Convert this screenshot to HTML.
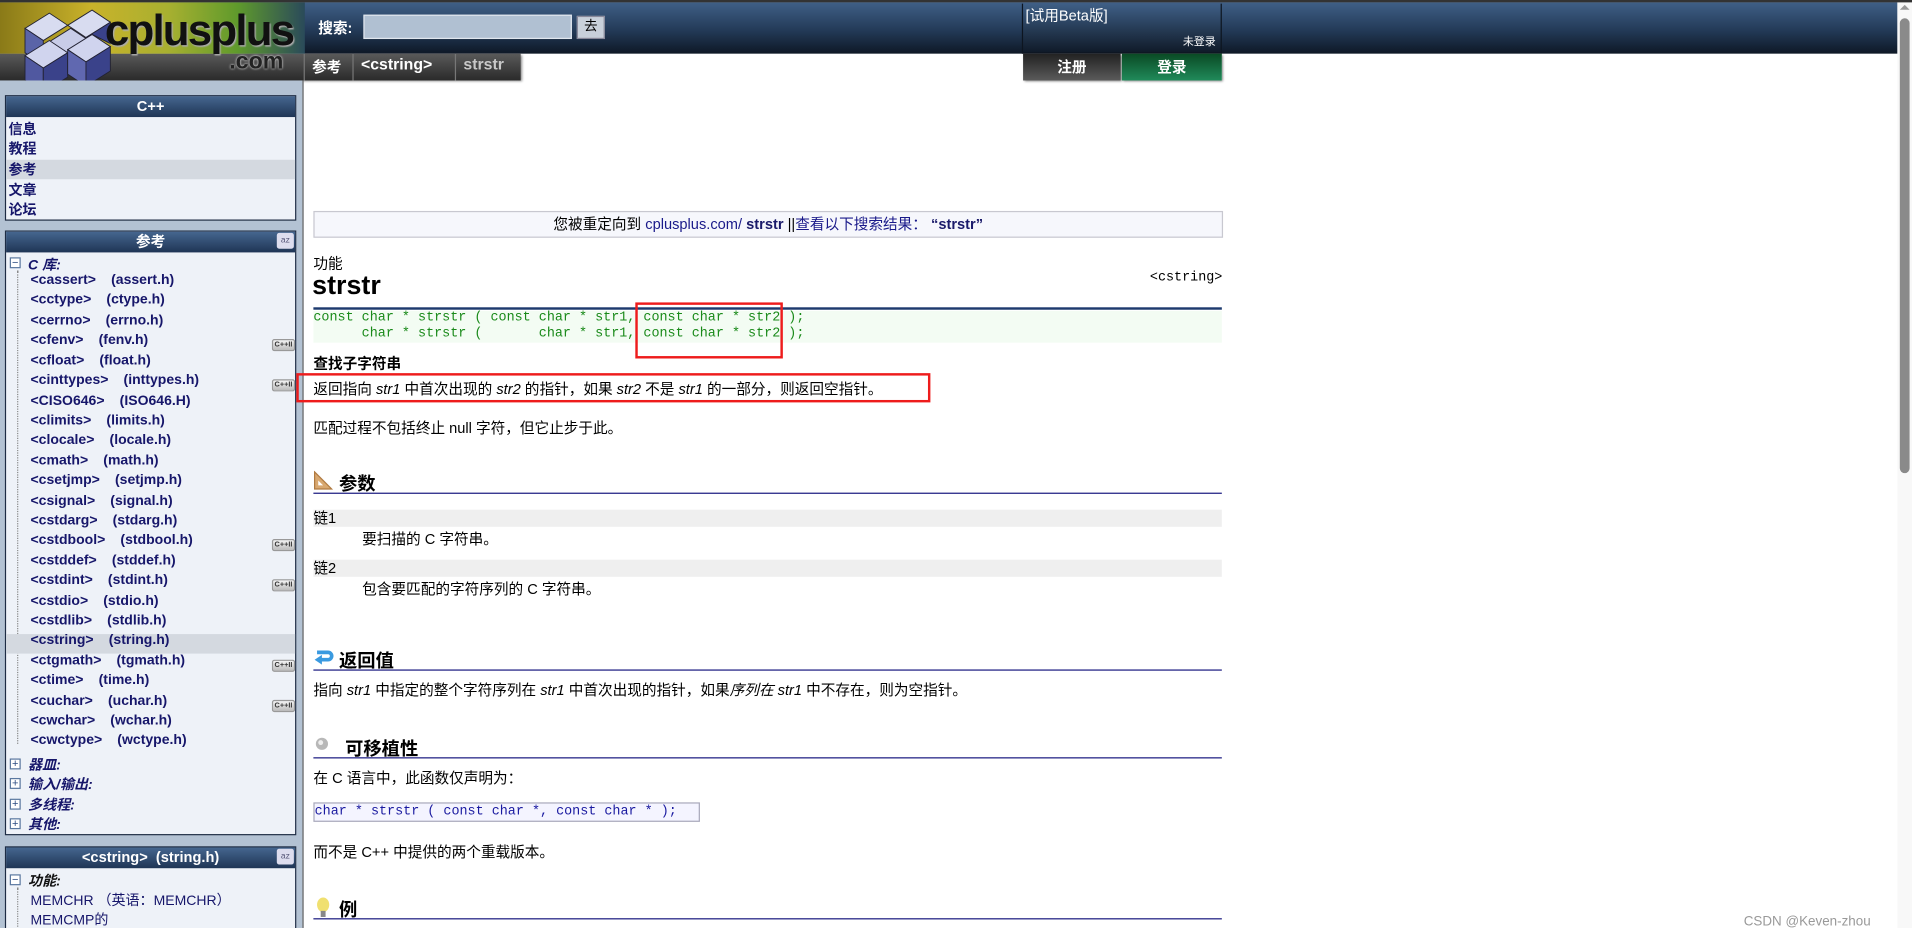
<!DOCTYPE html>
<html><head><meta charset="utf-8"><style>
*{margin:0;padding:0;box-sizing:border-box}
html,body{width:1912px;height:928px;overflow:hidden;background:#fff}
#w{position:absolute;left:0;top:0;width:1568px;height:761px;transform:scale(1.2194);transform-origin:0 0;font-family:"Liberation Sans","Noto Sans CJK SC",sans-serif;font-size:12px;color:#000;overflow:hidden}
.a{position:absolute;white-space:nowrap}
.hdr{position:absolute;left:0;top:2px;width:1556px;height:42px;background:linear-gradient(#3f5f86,#233a57 55%,#0e1826)}
.logo{position:absolute;left:0;top:2px;width:250px;height:42px;background:linear-gradient(90deg,#8a7a18,#c9b22a 30%,#a8b030 55%,#5f9a2c 78%,#2a4a5a 100%)}
.logo2{position:absolute;left:0;top:44px;width:427px;height:22px;background:linear-gradient(#5a5a5a,#2a2a2a);box-shadow:1px 1px 2px #888}
.side{position:absolute;left:0;top:66px;width:249px;height:695px;background:#b3c2d3;border-right:1px solid #666}
.box{position:absolute;left:4px;width:239px;background:#eef2f8;border:1px solid #1d2c44}
.bh{height:17px;background:linear-gradient(#45668f,#1f3555);color:#fff;font-weight:bold;text-align:center;font-size:12px;line-height:17px}
.it{position:absolute;left:2px;font-weight:bold;color:#16166a;font-size:11.5px}
.li{position:absolute;left:20px;font-weight:bold;color:#16166a;font-size:11.5px;word-spacing:3px}
.cpp{position:absolute;left:218px;width:19px;height:10px;background:linear-gradient(#f4f4f4,#bbb);border:1px solid #999;border-radius:2px;font-size:6px;line-height:8px;text-align:center;color:#333;font-weight:bold}
.tree{position:absolute;left:9px;border-left:1px dotted #888}
.pm{position:absolute;left:3px;width:9px;height:9px;border:1px solid #5a78a0;background:#fff;font-size:9px;line-height:7px;text-align:center;color:#2a4a80}
.h2{position:absolute;left:257px;width:745px;border-bottom:1px solid #1a1a80;font-weight:bold;font-size:15px;height:19px}
.mono{font-family:"Liberation Mono","DejaVu Sans Mono",monospace}
a{color:#1a1a8a;text-decoration:none}
</style></head><body><div id="w">
<div style="position:absolute;left:0;top:0;width:1568px;height:2px;background:#333"></div>
<div class="hdr"></div>
<div class="logo2"></div>
<div class="logo"></div>
<svg class="a" style="left:8px;top:3px" width="100" height="78" viewBox="0 0 80 62">
<g stroke="#223" stroke-width=".6">
<polygon points="10,16 26,6 38,14 22,24" fill="#d8dcf0"/>
<polygon points="10,16 22,24 22,40 10,32" fill="#5a64a8"/>
<polygon points="38,14 54,4 66,12 50,22" fill="#d8dcf0"/>
<polygon points="24,26 40,16 52,24 36,34" fill="#c8cce8"/>
<polygon points="10,34 26,24 38,32 22,42" fill="#d0d4ee"/>
<polygon points="10,34 22,42 22,58 10,50" fill="#5058a0"/>
<polygon points="22,42 38,32 38,48 22,58" fill="#3a428a"/>
<polygon points="38,30 54,20 66,28 50,38" fill="#d0d4ee"/>
<polygon points="38,30 50,38 50,54 38,46" fill="#6068b0"/>
<polygon points="50,38 66,28 66,44 50,54" fill="#3a428a"/>
<polygon points="50,22 66,12 66,26 54,20" fill="#3a428a"/>
</g></svg>
<div class="a" style="left:86px;top:4px;font-size:36px;font-weight:bold;color:#111;letter-spacing:-1.5px;text-shadow:1px 1px 1px #aaa">cplusplus</div>
<div class="a" style="left:188px;top:40px;font-size:19px;font-weight:bold;color:#222;text-shadow:0 0 2px #fff">.com</div>
<div class="a" style="left:261px;top:14px;color:#fff;font-weight:bold;font-size:12px">搜索:</div>
<div class="a" style="left:298px;top:12px;width:171px;height:20px;background:#b0c0d2;border:1px solid #e0e6ee"></div>
<div class="a" style="left:473px;top:13px;width:23px;height:19px;background:#c8d0da;border:1px solid #889;text-align:center;font-size:11px;line-height:17px">去</div>
<div class="a" style="left:249px;top:44px;width:1px;height:22px;background:#777"></div>
<div class="a" style="left:256px;top:46px;color:#fff;font-weight:bold;font-size:12px">参考</div>
<div class="a" style="left:289px;top:44px;width:1px;height:22px;background:#777"></div>
<div class="a" style="left:296px;top:45px;color:#fff;font-weight:bold;font-size:13px">&lt;cstring&gt;</div>
<div class="a" style="left:373px;top:44px;width:1px;height:22px;background:#777"></div>
<div class="a" style="left:380px;top:45px;color:#c8c8c8;font-weight:bold;font-size:13px">strstr</div>
<div class="a" style="left:838px;top:3px;width:164px;height:41px;border:1px solid #0d1520;border-top:none;background:linear-gradient(#3f5f86,#0f1a28)"></div>
<div class="a" style="left:841px;top:4px;color:#fff;font-size:12px">[试用Beta版]</div>
<div class="a" style="left:970px;top:27px;color:#fff;font-size:9px">未登录</div>
<div class="a" style="left:839px;top:44px;width:80px;height:22px;background:linear-gradient(#222,#5a5a5a);color:#fff;font-weight:bold;text-align:center;line-height:22px;box-shadow:1px 1px 2px #777">注册</div>
<div class="a" style="left:920px;top:44px;width:82px;height:22px;background:linear-gradient(#0a4a24,#208a5a);color:#fff;font-weight:bold;text-align:center;line-height:22px;box-shadow:1px 1px 2px #777">登录</div>

<div class="side"></div>
<div class="box" style="top:78px;height:103px"><div class="bh">C++</div>
<div class="a" style="left:0;top:52px;width:237px;height:16px;background:#d4d9e0"></div>
<div class="it" style="top:19px">信息</div><div class="it" style="top:35px">教程</div><div class="it" style="top:52px">参考</div><div class="it" style="top:69px">文章</div><div class="it" style="top:85px">论坛</div></div>

<div class="box" style="top:189px;height:496px"><div class="bh">参考</div>
<div class="a" style="left:222px;top:1px;width:14px;height:13px;background:#dde;border-radius:2px;font-size:7px;color:#557;text-align:center;line-height:13px">az</div>
<div class="pm" style="top:21px">−</div>
<div class="a" style="left:18px;top:19px;font-weight:bold;font-style:italic;color:#16166a;font-size:11.5px">C 库:</div>
<div class="tree" style="top:32px;height:388px"></div>
<div class="a" style="left:0;top:330px;width:237px;height:16px;background:#d4d9e0"></div>
<div class="li" style="top:34px">&lt;cassert&gt; &nbsp;(assert.h)</div>
<div class="li" style="top:50px">&lt;cctype&gt; &nbsp;(ctype.h)</div>
<div class="li" style="top:67px">&lt;cerrno&gt; &nbsp;(errno.h)</div>
<div class="li" style="top:83px">&lt;cfenv&gt; &nbsp;(fenv.h)</div><div class="cpp" style="top:88px">C++II</div>
<div class="li" style="top:100px">&lt;cfloat&gt; &nbsp;(float.h)</div>
<div class="li" style="top:116px">&lt;cinttypes&gt; &nbsp;(inttypes.h)</div><div class="cpp" style="top:121px">C++II</div>
<div class="li" style="top:133px">&lt;CISO646&gt; &nbsp;(ISO646.H)</div>
<div class="li" style="top:149px">&lt;climits&gt; &nbsp;(limits.h)</div>
<div class="li" style="top:165px">&lt;clocale&gt; &nbsp;(locale.h)</div>
<div class="li" style="top:182px">&lt;cmath&gt; &nbsp;(math.h)</div>
<div class="li" style="top:198px">&lt;csetjmp&gt; &nbsp;(setjmp.h)</div>
<div class="li" style="top:215px">&lt;csignal&gt; &nbsp;(signal.h)</div>
<div class="li" style="top:231px">&lt;cstdarg&gt; &nbsp;(stdarg.h)</div>
<div class="li" style="top:247px">&lt;cstdbool&gt; &nbsp;(stdbool.h)</div><div class="cpp" style="top:252px">C++II</div>
<div class="li" style="top:264px">&lt;cstddef&gt; &nbsp;(stddef.h)</div>
<div class="li" style="top:280px">&lt;cstdint&gt; &nbsp;(stdint.h)</div><div class="cpp" style="top:285px">C++II</div>
<div class="li" style="top:297px">&lt;cstdio&gt; &nbsp;(stdio.h)</div>
<div class="li" style="top:313px">&lt;cstdlib&gt; &nbsp;(stdlib.h)</div>
<div class="li" style="top:329px">&lt;cstring&gt; &nbsp;(string.h)</div>
<div class="li" style="top:346px">&lt;ctgmath&gt; &nbsp;(tgmath.h)</div><div class="cpp" style="top:351px">C++II</div>
<div class="li" style="top:362px">&lt;ctime&gt; &nbsp;(time.h)</div>
<div class="li" style="top:379px">&lt;cuchar&gt; &nbsp;(uchar.h)</div><div class="cpp" style="top:384px">C++II</div>
<div class="li" style="top:395px">&lt;cwchar&gt; &nbsp;(wchar.h)</div>
<div class="li" style="top:411px">&lt;cwctype&gt; &nbsp;(wctype.h)</div>
<div class="pm" style="top:432px">+</div><div class="a" style="left:18px;top:429px;font-weight:bold;font-style:italic;color:#16166a;font-size:11.5px">器皿:</div>
<div class="pm" style="top:448px">+</div><div class="a" style="left:18px;top:445px;font-weight:bold;font-style:italic;color:#16166a;font-size:11.5px">输入/输出:</div>
<div class="pm" style="top:465px">+</div><div class="a" style="left:18px;top:462px;font-weight:bold;font-style:italic;color:#16166a;font-size:11.5px">多线程:</div>
<div class="pm" style="top:481px">+</div><div class="a" style="left:18px;top:478px;font-weight:bold;font-style:italic;color:#16166a;font-size:11.5px">其他:</div>
</div>

<div class="box" style="top:694px;height:80px"><div class="bh">&lt;cstring&gt; &nbsp;(string.h)</div>
<div class="a" style="left:222px;top:1px;width:14px;height:13px;background:#dde;border-radius:2px;font-size:7px;color:#557;text-align:center;line-height:13px">az</div>
<div class="pm" style="top:22px">−</div>
<div class="a" style="left:18px;top:19px;font-weight:bold;font-style:italic;color:#111;font-size:11.5px">功能:</div>
<div class="tree" style="top:33px;height:40px"></div>
<div class="a" style="left:20px;top:35px;color:#16166a;font-size:11.5px">MEMCHR （英语：MEMCHR）</div>
<div class="a" style="left:20px;top:51px;color:#16166a;font-size:11.5px">MEMCMP的</div>
</div>

<div class="a" style="left:257px;top:173px;width:746px;height:22px;background:#f6f7fc;border:1px solid #c8c8d0;text-align:center;line-height:20px;font-size:12px">您被重定向到 <a>cplusplus.com/</a> <b style="color:#1a1a6a">strstr</b> ||<a>查看以下搜索结果：</a> <b style="color:#1a1a6a">“strstr”</b></div>
<div class="a" style="left:257px;top:207px">功能</div>
<div class="a" style="left:256px;top:221px;font-size:22px;font-weight:bold">strstr</div>
<div class="a mono" style="left:943px;top:222px;font-size:11px">&lt;cstring&gt;</div>
<div class="a" style="left:257px;top:252px;width:745px;height:2px;background:#1d3a6e"></div>
<div class="a mono" style="left:257px;top:255px;width:745px;height:26px;background:#f3fcf3;color:#1a8a1a;font-size:11px;line-height:13px;white-space:pre">const char * strstr ( const char * str1, const char * str2 );
      char * strstr (       char * str1, const char * str2 );</div>
<div class="a" style="left:521px;top:248px;width:121px;height:46px;border:2px solid #ee1c1c"></div>
<div class="a" style="left:257px;top:289px;font-weight:bold">查找子字符串</div>
<div class="a" style="left:243px;top:306px;width:520px;height:24px;border:2px solid #ee1c1c"></div>
<div class="a" style="left:257px;top:310px">返回指向 <i>str1</i> 中首次出现的 <i>str2</i> 的指针，如果 <i>str2</i> 不是 <i>str1</i> 的一部分，则返回空指针。</div>
<div class="a" style="left:257px;top:342px">匹配过程不包括终止 null 字符，但它止步于此。</div>

<div class="h2" style="top:386px"><svg style="position:absolute;left:0;top:0" width="16" height="16"><polygon points="1,1 1,15 15,15" fill="#d8a870" stroke="#b07a40"/><polygon points="4,8 4,12 8,12" fill="#fff"/></svg><span style="position:absolute;left:21px;top:0">参数</span></div>
<div class="a" style="left:257px;top:418px;width:745px;height:14px;background:#efefef;line-height:14px">链1</div>
<div class="a" style="left:297px;top:433px">要扫描的 C 字符串。</div>
<div class="a" style="left:257px;top:459px;width:745px;height:14px;background:#efefef;line-height:14px">链2</div>
<div class="a" style="left:297px;top:474px">包含要匹配的字符序列的 C 字符串。</div>

<div class="h2" style="top:531px"><svg style="position:absolute;left:0;top:0" width="17" height="17"><path d="M3 4h9a3 3 0 0 1 0 6H6" fill="none" stroke="#3a9ae0" stroke-width="3"/><polygon points="1,10 7,6 7,14" fill="#3a9ae0"/></svg><span style="position:absolute;left:21px;top:0">返回值</span></div>
<div class="a" style="left:257px;top:557px">指向 <i>str1</i> 中指定的整个字符序列在 <i>str1</i> 中首次出现的指针，如果<i>序列在 str1</i> 中不存在，则为空指针。</div>

<div class="h2" style="top:603px"><svg style="position:absolute;left:0;top:0" width="16" height="16"><circle cx="7" cy="7" r="5" fill="#b8b8b8"/><circle cx="6" cy="6" r="2" fill="#eee"/></svg><span style="position:absolute;left:26px;top:0">可移植性</span></div>
<div class="a" style="left:257px;top:629px">在 C 语言中，此函数仅声明为：</div>
<div class="a mono" style="left:257px;top:658px;width:317px;height:16px;background:#f4f4ff;border:1px solid #aab;color:#1a1aa0;font-size:11px;line-height:14px;white-space:pre">char * strstr ( const char *, const char * );</div>
<div class="a" style="left:257px;top:690px">而不是 C++ 中提供的两个重载版本。</div>

<div class="h2" style="top:735px"><svg style="position:absolute;left:0;top:0" width="16" height="18"><ellipse cx="8" cy="7" rx="5" ry="6" fill="#f0e070"/><rect x="6" y="12" width="4" height="5" fill="#888"/></svg><span style="position:absolute;left:21px;top:0">例</span></div>

<div class="a" style="left:1556px;top:2px;width:12px;height:759px;background:#f8f8f8"></div>
<div class="a" style="left:1558px;top:4px;width:0;height:0;border-left:4px solid transparent;border-right:4px solid transparent;border-bottom:4px solid #999"></div>
<div class="a" style="left:1558px;top:15px;width:8px;height:373px;background:#8a8a8a;border-radius:4px"></div>
<div class="a" style="left:1430px;top:750px;color:#999;font-size:11px">CSDN @Keven-zhou</div>
</div></body></html>
